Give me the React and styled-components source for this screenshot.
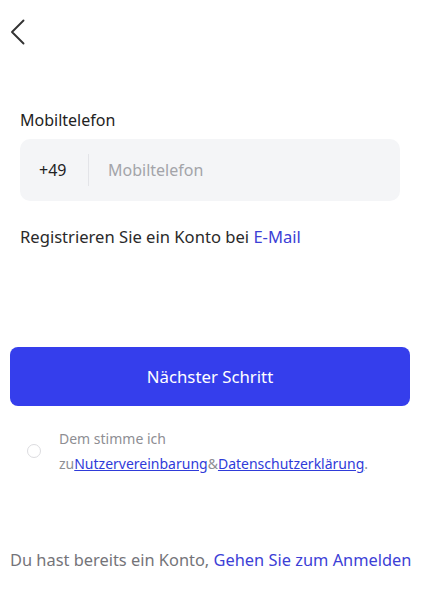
import React from 'react'
import styled, { createGlobalStyle } from 'styled-components'

const GlobalStyle = createGlobalStyle`
  html, body {
    margin: 0;
    padding: 0;
    background: #ffffff;
    font-family: 'Noto Sans', 'Open Sans', sans-serif;
  }
`

const Page = styled.div`
  width: 425px;
  min-height: 601px;
  display: flex;
  flex-direction: column;
  background: #ffffff;
`

const TopBar = styled.div`
  height: 64px;
  display: flex;
  align-items: center;
  padding-left: 10px;
`

const BackButton = styled.button`
  border: none;
  background: none;
  padding: 0;
  width: 16px;
  height: 26px;
  display: flex;
  align-items: center;
  cursor: pointer;
`

const Form = styled.div`
  padding: 0 25px 0 20px;
  margin-top: 45px;
`

const Label = styled.div`
  font-size: 16px;
  line-height: 22px;
  color: #222222;
`

const PhoneBox = styled.div`
  margin-top: 8px;
  height: 62px;
  background: #f4f5f7;
  border-radius: 10px;
  display: flex;
  align-items: center;
  padding-left: 19px;
`

const Prefix = styled.span`
  font-size: 16px;
  color: #222222;
  width: 49px;
  height: 32px;
  line-height: 32px;
  border-right: 1px solid #e3e4e8;
`

const PhoneInput = styled.input`
  flex: 1;
  margin-left: 17px;
  border: none;
  background: transparent;
  outline: none;
  font-family: inherit;
  font-size: 16px;
  color: #222222;
  &::placeholder {
    color: #a3a4a9;
  }
`

const SwitchLine = styled.div`
  margin-top: 25px;
  font-size: 16.6px;
  line-height: 22px;
  color: #2a2a2a;
`

const Link = styled.a`
  color: ${p => p.$blue || '#3c40d6'};
  text-decoration: ${p => (p.$underline ? 'underline' : 'none')};
  cursor: pointer;
`

const PrimaryButton = styled.button`
  margin: 99px 15px 0 10px;
  height: 59px;
  border: none;
  border-radius: 8px;
  background: #353eec;
  color: #ffffff;
  font-family: inherit;
  font-size: 16.8px;
  cursor: pointer;
`

const Agreement = styled.div`
  margin-top: 20px;
  padding-left: 27px;
  display: flex;
  align-items: center;
  gap: 18px;
`

const Radio = styled.span`
  width: 12px;
  height: 12px;
  border: 1px solid #dcdcdf;
  border-radius: 50%;
  flex-shrink: 0;
`

const AgreementText = styled.div`
  font-size: 14px;
  line-height: 25px;
  color: #8e8e93;
`

const Footer = styled.div`
  margin-top: 73px;
  padding-left: 10px;
  font-size: 16.4px;
  line-height: 22px;
  color: #747479;
`

const ChevronLeft = () => (
  <svg width="16" height="26" viewBox="0 0 16 26" fill="none">
    <path d="M13.5 1.5 L2 13 L13.5 24.5" stroke="#333333" strokeWidth="1.9" strokeLinecap="round" strokeLinejoin="round" />
  </svg>
)

export default function App() {
  return (
    <Page>
      <GlobalStyle />
      <TopBar>
        <BackButton aria-label="Zurück">
          <ChevronLeft />
        </BackButton>
      </TopBar>

      <Form>
        <Label>Mobiltelefon</Label>
        <PhoneBox>
          <Prefix>+49</Prefix>
          <PhoneInput placeholder="Mobiltelefon" />
        </PhoneBox>
        <SwitchLine>
          Registrieren Sie ein Konto bei <Link>E-Mail</Link>
        </SwitchLine>
      </Form>

      <PrimaryButton>Nächster Schritt</PrimaryButton>

      <Agreement>
        <Radio />
        <AgreementText>
          Dem stimme ich
          <br />
          zu<Link $blue="#2f3bd9" $underline>Nutzervereinbarung</Link>&amp;<Link $blue="#2f3bd9" $underline>Datenschutzerklärung</Link>.
        </AgreementText>
      </Agreement>

      <Footer>
        Du hast bereits ein Konto, <Link>Gehen Sie zum Anmelden</Link>
      </Footer>
    </Page>
  )
}
